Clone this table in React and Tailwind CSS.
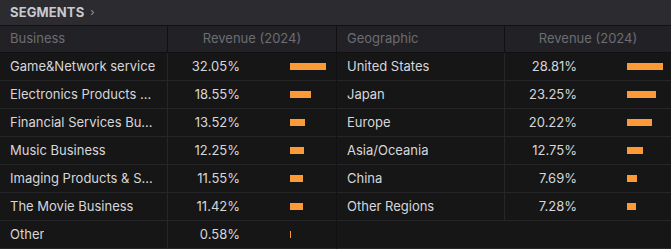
const BUSINESS = [
  { name: "Game&Network service", pct: 32.05 },
  { name: "Electronics Products ...", pct: 18.55 },
  { name: "Financial Services Bus...", pct: 13.52 },
  { name: "Music Business", pct: 12.25 },
  { name: "Imaging Products & S...", pct: 11.55 },
  { name: "The Movie Business", pct: 11.42 },
  { name: "Other", pct: 0.58 },
];

const GEO = [
  { name: "United States", pct: 28.81 },
  { name: "Japan", pct: 23.25 },
  { name: "Europe", pct: 20.22 },
  { name: "Asia/Oceania", pct: 12.75 },
  { name: "China", pct: 7.69 },
  { name: "Other Regions", pct: 7.28 },
];

function SegmentTable({ label, rows, total, className }) {
  const max = Math.max(...rows.map((r) => r.pct));
  const filler = Array.from({ length: total - rows.length });

  return (
    <div className={`flex flex-col ${className}`}>
      <div className="grid h-[27px] grid-cols-[168px_1fr] border-b border-[#111113] bg-[#222226] text-[13px] text-[#6c6c73]">
        <div className="flex items-center border-r border-[#111113] pl-[10px]">{label}</div>
        <div className="flex items-center justify-center">Revenue (2024)</div>
      </div>
      {rows.map((row) => (
        <div
          key={row.name}
          className="grid h-[28px] grid-cols-[168px_1fr] border-b border-[#262628] bg-[#161616] text-[13px] text-[#d6d6da]"
        >
          <div className="flex min-w-0 items-center border-r border-[#262628] pl-[10px] pr-2">
            <span className="truncate whitespace-nowrap">{row.name}</span>
          </div>
          <div className="flex items-center">
            <span className="w-[72px] text-right">{row.pct.toFixed(2)}%</span>
            <div className="ml-[50px] flex h-[7px] items-center">
              <div
                className="h-[7px] bg-[#fb9a36]"
                style={{ width: `${Math.max(1, Math.round((row.pct / max) * 36))}px` }}
              />
            </div>
          </div>
        </div>
      ))}
      {filler.map((_, i) => (
        <div key={i} className="h-[28px] border-b border-[#262628] bg-[#161616]" />
      ))}
    </div>
  );
}

export default function App() {
  return (
    <div className="h-[249px] w-[671px] overflow-hidden bg-[#161616] font-['Inter','Liberation_Sans',sans-serif]">
      <div className="flex h-[26px] items-center gap-[6px] border-b border-[#111113] bg-[#2b2b30] pl-[10px]">
        <span className="text-[13px] font-bold tracking-[0.01em] text-[#c9c9ce]">SEGMENTS</span>
        <span className="text-[11px] text-[#9a9aa0]">›</span>
      </div>
      <div className="grid grid-cols-[337px_1fr]">
        <SegmentTable label="Business" rows={BUSINESS} total={7} className="border-r border-[#111113]" />
        <SegmentTable label="Geographic" rows={GEO} total={7} />
      </div>
    </div>
  );
}
